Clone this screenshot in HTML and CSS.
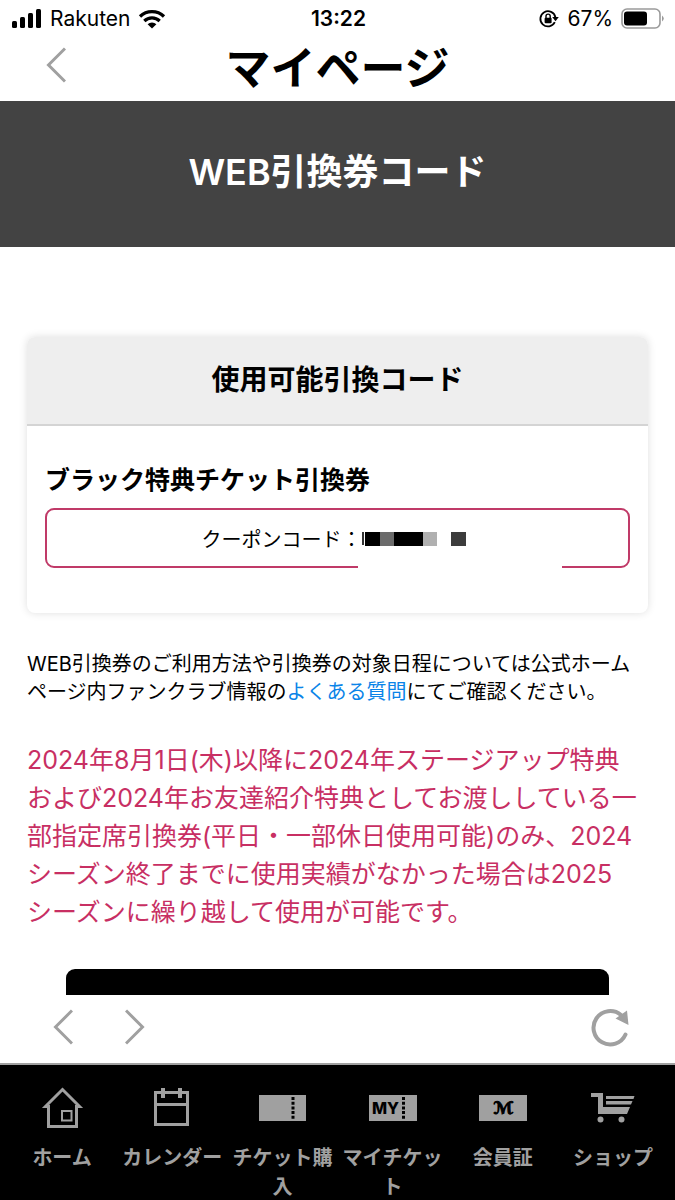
FILE: index.html
```html
<!DOCTYPE html>
<html lang="ja">
<head>
  <meta charset="UTF-8" />
  <meta name="viewport" content="width=device-width, initial-scale=1.0"/>
  <title>マイページ</title>
  <link rel="stylesheet" href="styles.css">
</head>
<body>

  <div class="status-bar">
    <div class="status-left">
      <svg width="30" height="20" viewBox="0 0 30 20">
        <rect x="0" y="12" width="5" height="7" rx="1.5"/>
        <rect x="8" y="8" width="5" height="11" rx="1.5"/>
        <rect x="16" y="4" width="5" height="15" rx="1.5"/>
        <rect x="24" y="0" width="5" height="19" rx="1.5"/>
      </svg>
      <span>Rakuten</span>
      <svg width="28" height="20" viewBox="0 0 28 20">
        <path d="M2 7.5a17 17 0 0 1 24 0M6.3 12a11 11 0 0 1 15.4 0" fill="none" stroke="#000" stroke-width="3.2"/>
        <path d="M14 19.5l-4.4-4.3a6.4 6.4 0 0 1 8.8 0z"/>
      </svg>
    </div>
    <div class="status-time">13:22</div>
    <div class="status-right">
      <svg width="20" height="20" viewBox="0 0 20 20">
        <path d="M15.8 13.200a7.600 7.600 0 1 1 .6-5" fill="none" stroke="#000" stroke-width="1.8"/>
        <path d="M13.2 8h6.600l-3.300 4.200z"/>
        <rect x="5.6" y="8.8" width="7" height="5.4" rx="1"/>
        <path d="M7 9V7.2a2.1 2.1 0 0 1 4.2 0V9" fill="none" stroke="#000" stroke-width="1.4"/>
      </svg>
      <span>67%</span>
      <svg width="44" height="22" viewBox="0 0 44 22">
        <rect x="1" y="1" width="38" height="19" rx="5" fill="none" stroke="#9a9a9a" stroke-width="1.6"/>
        <rect x="3" y="3.5" width="23" height="14" rx="3"/>
        <path d="M41 7.5q3.500 3 0 6z" fill="#9a9a9a"/>
      </svg>
    </div>
  </div>

  <header class="header">
    <button class="icon-button" type="button" aria-label="戻る">
      <svg width="20" height="36" viewBox="0 0 20 36"><path d="M19 1.5L2.5 18L19 34.5"/></svg>
    </button>
    <h1>マイページ</h1>
  </header>

  <main class="content">
    <h2 class="banner">WEB引換券コード</h2>

    <div class="inner">
      <section class="card">
        <h3 class="card-title">使用可能引換コード</h3>
        <div class="card-body">
          <h4>ブラック特典チケット引換券</h4>
          <div class="coupon">
            <span>クーポンコード：</span>
            <svg width="112" height="16" viewBox="0 0 112 16">
              <rect x="0" y="2" width="2" height="13" fill="#333"/>
              <rect x="3" y="2" width="15" height="14"/>
              <rect x="18" y="2" width="14" height="14" fill="#6b6b6b"/>
              <rect x="32" y="2" width="29" height="14"/>
              <rect x="61" y="2" width="14" height="14" fill="#b0b0b0"/>
              <rect x="89" y="2" width="15" height="14" fill="#3c3c3c"/>
            </svg>
            <span class="mask"></span>
          </div>
        </div>
      </section>

      <p class="note">WEB引換券のご利用方法や引換券の対象日程については公式ホームページ内ファンクラブ情報の<a href="#">よくある質問</a>にてご確認ください。</p>

      <p class="notice">
        2024年8月1日(木)以降に2024年ステージアップ特典<br>
        および2024年お友達紹介特典としてお渡ししている一<br>
        部指定席引換券(平日・一部休日使用可能)のみ、2024<br>
        シーズン終了までに使用実績がなかった場合は2025<br>
        シーズンに繰り越して使用が可能です。
      </p>

      <button class="main-button" type="button" aria-label="マイページ"></button>
    </div>
  </main>

  <div class="toolbar">
    <button class="icon-button" type="button" aria-label="前へ">
      <svg width="20" height="36" viewBox="0 0 20 36"><path d="M19 1.5L2.5 18L19 34.5"/></svg>
    </button>
    <button class="icon-button" type="button" aria-label="次へ">
      <svg width="20" height="36" viewBox="0 0 20 36"><path d="M1 1.5L17.5 18L1 34.5"/></svg>
    </button>
    <button class="icon-button reload" type="button" aria-label="再読み込み">
      <svg width="38" height="40" viewBox="0 0 38 40">
        <path d="M34.5 27.500A16.700 16.700 0 1 1 30 8" class="ring"/>
        <path d="M24.5 11.5L36 3.500L37.5 18z" class="fill"/>
      </svg>
    </button>
  </div>

  <nav class="tabs">
    <a href="#">
      <svg width="48" height="44" viewBox="0 0 48 44">
        <path d="M7.500 21.5H10.5V41.500H38.500V21.5H41.500L24.500 4.500z" fill="none" stroke="#a0a0a0" stroke-width="3"/>
        <rect x="24" y="26" width="9.500" height="9.500" fill="none" stroke="#a0a0a0" stroke-width="2"/>
      </svg>
      <span>ホーム</span>
    </a>
    <a href="#">
      <svg width="48" height="44" viewBox="0 0 48 44">
        <path d="M7.500 7.5H39.5V39.5H7.500zM7.500 19.5H39.5" fill="none" stroke="#a0a0a0" stroke-width="3"/>
        <path d="M15 3V13M32 3V13" stroke="#a0a0a0" stroke-width="4"/>
      </svg>
      <span>カレンダー</span>
    </a>
    <a href="#">
      <svg width="48" height="44" viewBox="0 0 48 44">
        <rect x="1" y="10" width="47" height="26" fill="#a0a0a0"/>
        <path d="M35 12V34" stroke="#000" stroke-width="3" stroke-dasharray="3 1.7"/>
      </svg>
      <span>チケット購入</span>
    </a>
    <a href="#">
      <svg width="48" height="44" viewBox="0 0 48 44">
        <rect x="0" y="10" width="48" height="26" fill="#a0a0a0"/>
        <text x="3" y="29" class="my">MY</text>
        <path d="M34.5 12V34" stroke="#000" stroke-width="3" stroke-dasharray="3 1.7"/>
      </svg>
      <span>マイチケット</span>
    </a>
    <a href="#">
      <svg width="48" height="44" viewBox="0 0 48 44">
        <rect x="0" y="10" width="48" height="26" fill="#a0a0a0"/>
        <text x="24" y="29" class="script-m">ℳ</text>
      </svg>
      <span>会員証</span>
    </a>
    <a href="#">
      <svg width="48" height="44" viewBox="0 0 48 44">
        <path d="M2 8H14V29H9V12H2z" fill="#a0a0a0"/>
        <path d="M17 11H45.500L44.500 14H17zM17 16H43.500L42 19.500H17zM13 22H41L38 29H13z" fill="#a0a0a0"/>
        <circle cx="11.5" cy="34.5" r="3" fill="#a0a0a0"/>
        <circle cx="32.5" cy="34.5" r="3" fill="#a0a0a0"/>
      </svg>
      <span>ショップ</span>
    </a>
  </nav>

</body>
</html>
```
FILE: styles.css
```css
* {
  box-sizing: border-box;
  margin: 0;
  padding: 0;
}

body {
  font-family: Inter, "Noto Sans CJK JP", sans-serif;
  height: 100vh;
  background: #fff;
  color: #000;
  display: flex;
  flex-direction: column;
}

svg {
  display: block;
  flex: none;
}

button {
  border: none;
  background: none;
  cursor: pointer;
}

/* status bar */
.status-bar {
  display: grid;
  grid-template-columns: 1fr auto 1fr;
  align-items: center;
  height: 37px;
  padding: 0 10px 0 12px;
  font-size: 21px;
}

.status-left,
.status-right {
  display: flex;
  align-items: center;
  gap: 8px;
}

.status-right {
  justify-content: flex-end;
}

.status-time {
  font-weight: 600;
}

/* header */
.header {
  display: grid;
  grid-template-columns: 1fr auto 1fr;
  align-items: start;
  height: 64px;
  padding: 10px 46px 0;
}

.header h1 {
  font-size: 45px;
  line-height: 44px;
}

.icon-button {
  justify-self: start;
}

.icon-button path {
  fill: none;
  stroke: #a0a0a0;
  stroke-width: 3;
}

.icon-button .ring {
  stroke-width: 4;
  stroke-linecap: round;
}

.icon-button .fill {
  fill: #a0a0a0;
  stroke: none;
}

/* page content */
.content {
  flex: 1;
  min-height: 0;
  overflow: hidden;
}

.banner {
  padding: 45px 20px 49px;
  background: #434343;
  color: #fff;
  font-size: 36px;
  font-weight: 600;
  line-height: 52px;
  text-align: center;
}

.inner {
  padding: 90px 27px 0;
}

.card {
  border-radius: 8px;
  overflow: hidden;
  box-shadow: 0 0 8px rgba(0, 0, 0, 0.13);
}

.card-title {
  padding: 23px 24px 24px;
  background: #eee;
  border-bottom: 2px solid #d4d4d4;
  font-size: 28px;
  line-height: 40px;
  text-align: center;
}

.card-body {
  padding: 36px 18px 45px;
}

.card-body h4 {
  margin-bottom: 10px;
  font-size: 25px;
  line-height: 36px;
}

.coupon {
  position: relative;
  display: flex;
  align-items: center;
  justify-content: center;
  height: 60px;
  border: 2px solid #c03a68;
  border-radius: 9px;
  font-size: 20px;
}

.mask {
  position: absolute;
  right: 66px;
  bottom: -3px;
  width: 204px;
  height: 10px;
  background: #fff;
}

.note {
  margin-top: 37px;
  font-size: 20px;
  line-height: 28px;
}

.note a {
  color: #0a84e8;
  text-decoration: none;
}

.notice {
  margin-top: 35px;
  color: #c82f63;
  font-size: 25px;
  line-height: 38px;
}

.main-button {
  display: block;
  width: calc(100% - 78px);
  height: 80px;
  margin: 38px auto 0;
  background: #000;
  border-radius: 9px;
}

/* browser toolbar */
.toolbar {
  display: flex;
  align-items: center;
  gap: 52px;
  height: 68px;
  padding: 0 46px 4px 53px;
}

.reload {
  margin-left: auto;
}

/* bottom tabs */
.tabs {
  display: grid;
  grid-template-columns: repeat(6, 1fr);
  height: 137px;
  padding: 20px 7px 0;
  background: #000;
  border-top: 2px solid #a0a0a0;
}

.tabs a {
  display: flex;
  flex-direction: column;
  align-items: center;
  gap: 15px;
  color: #a0a0a0;
  font-size: 20px;
  font-weight: bold;
  line-height: 29px;
  text-align: center;
  text-decoration: none;
}

.my {
  font: 800 16px Inter, sans-serif;
}

.script-m {
  font: bold 17px "DejaVu Sans", "DejaVu Serif", serif;
  stroke: #000;
  stroke-width: 1;
  text-anchor: middle;
}
```
